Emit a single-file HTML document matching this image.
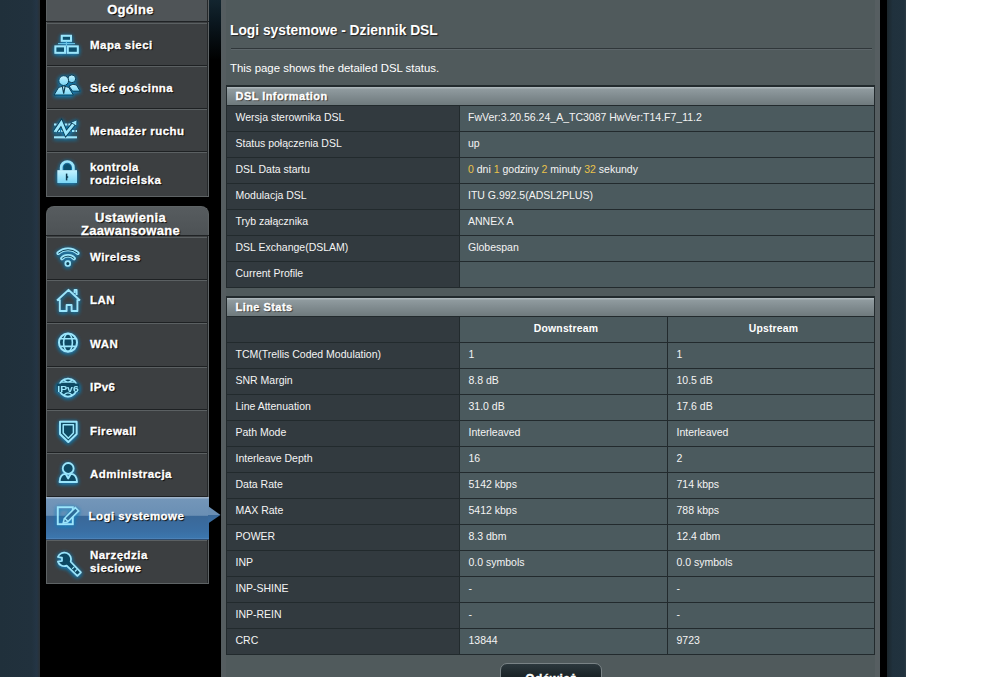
<!DOCTYPE html>
<html><head><meta charset="utf-8"><style>
*{margin:0;padding:0;box-sizing:border-box}
html,body{width:999px;height:677px;overflow:hidden;background:#fff;font-family:"Liberation Sans",sans-serif}
.abs{position:absolute}
#navyL{left:0;top:0;width:40px;height:677px;background:linear-gradient(to right,#20303b 0,#21313d 78%,#243545 92%,#2a3034 100%)}
#blackcol{left:40px;top:0;width:181px;height:677px;background:#000}
#gapgrad{left:209px;top:0;width:12px;height:60px;background:linear-gradient(to bottom,#13252f 0,#0b1820 35%,#000 100%)}
#panel{left:221px;top:0;width:659px;height:677px;background:#505a5c}
#panelL{left:221px;top:0;width:5px;height:677px;background:#555d60}
#panelR{left:875px;top:0;width:5px;height:677px;background:#565e61}
#blackR{left:880px;top:0;width:7px;height:677px;background:#000}
#navyR{left:887px;top:0;width:19px;height:677px;background:linear-gradient(to right,#1b262b 0,#20313d 30%,#21323e 90%,#2b3a44 100%)}
.cont{left:46px;width:163px;background:#3c3f41;border:1px solid #5e6365;border-top:none}
.ll{left:47px;width:161px;height:1px;background:#5b6062}
.dl{left:47px;width:161px;height:1px;background:#1e2123}
.mt{-webkit-text-stroke:0.3px #fff;letter-spacing:0.45px;color:#fff;font-weight:bold;font-size:11.5px;line-height:12px;text-shadow:1px 1px 1px #000;white-space:nowrap}
.gh{-webkit-text-stroke:0.3px #fff;letter-spacing:0.3px;color:#fff;font-weight:bold;font-size:13px;line-height:13px;text-shadow:1px 1px 1px #000;white-space:nowrap;text-align:center;width:163px;left:49px}
.h1{left:230px;font-size:13.8px;line-height:14px;font-weight:bold;color:#fff;text-shadow:1px 1px 1px #222;white-space:nowrap}
.desc{left:230px;font-size:11.4px;line-height:12px;color:#fff;white-space:nowrap}
.tbl{left:226px;width:649px;background:#222a2d}
.thd{left:227px;width:647px;height:18px;background:linear-gradient(to bottom,#b0babe 0,#a8b2b6 1px,#909b9f 2px,#818c90 50%,#6f7a7d 100%)}
.tht{-webkit-text-stroke:0.3px #fff;letter-spacing:0.45px;left:235.5px;color:#fff;font-weight:bold;font-size:11px;line-height:12px;text-shadow:1px 1px 1px #333;white-space:nowrap}
.c1{left:227px;width:232px;height:25px;background:#323a3f}
.c2{left:460px;width:414px;height:25px;background:#4b5a5e}
.c2a{left:460px;width:207px;height:25px;background:#4b5a5e}
.c2b{left:668px;width:206px;height:25px;background:#4b5a5e}
.tt{font-size:10.5px;line-height:11px;color:#f4f4f4;white-space:nowrap}
.tb{padding-left:5px;letter-spacing:0.2px;font-size:10.4px;line-height:11px;color:#fff;font-weight:bold;white-space:nowrap;text-align:center}
.y{color:#e9c24a}
#btn{left:500px;top:663px;width:102px;height:30px;border:1px solid #7a8386;border-radius:7px;background:linear-gradient(to bottom,#2c383d 0,#1c2529 40%,#12181b 100%)}
#btnt{left:500px;width:102px;text-align:center;color:#fff;font-weight:bold;font-size:12px;line-height:12px;-webkit-text-stroke:0.3px #fff;letter-spacing:0.4px}
#sel{left:46px;top:497px;width:163px;height:43px;background:linear-gradient(to bottom,#a0b4ca 0,#a0b4ca 1px,#7396b9 2px,#6a8fb4 42.5%,#3a6898 45%,#3a6fa4 80%,#3c77ae 96%,#5a8cc0 97%,#13233a 100%)}
</style></head><body>
<div id="navyL" class="abs"></div><div id="blackcol" class="abs"></div><div id="gapgrad" class="abs"></div>
<div id="panel" class="abs"></div><div id="panelL" class="abs"></div><div id="panelR" class="abs"></div><div id="blackR" class="abs"></div><div id="navyR" class="abs"></div>
<div class="abs" style="left:46px;top:0;width:163px;height:21px;background:#4f5457;border-left:1px solid #5e6365;border-right:1px solid #5e6365"></div>
<div class="abs" style="left:46px;top:21px;width:163px;height:1px;background:#202325"></div>
<div class="abs gh" style="top:2.8px">Ogólne</div>
<div class="abs cont" style="top:22px;height:175px"></div>
<div class="abs ll" style="top:23px"></div>
<div class="abs dl" style="top:65px"></div>
<div class="abs ll" style="top:66px"></div>
<div class="abs dl" style="top:108px"></div>
<div class="abs ll" style="top:109px"></div>
<div class="abs dl" style="top:151px"></div>
<div class="abs ll" style="top:152px"></div>
<div class="abs" style="left:207px;top:0;width:1px;height:196px;background:#25282a"></div>
<div class="abs" style="left:46px;top:206px;width:163px;height:30px;background:linear-gradient(to bottom,#575c5f,#4d5255);border:1px solid #5e6365;border-bottom:none;border-radius:8px 8px 0 0"></div>
<div class="abs" style="left:46px;top:235px;width:163px;height:1px;background:#202325"></div>
<div class="abs gh" style="top:210.8px">Ustawienia</div>
<div class="abs gh" style="top:224.4px">Zaawansowane</div>
<div class="abs cont" style="top:236px;height:348px"></div>
<div class="abs ll" style="top:237px"></div>
<div class="abs dl" style="top:279px"></div>
<div class="abs ll" style="top:280px"></div>
<div class="abs dl" style="top:322px"></div>
<div class="abs ll" style="top:323px"></div>
<div class="abs dl" style="top:366px"></div>
<div class="abs ll" style="top:367px"></div>
<div class="abs dl" style="top:409px"></div>
<div class="abs ll" style="top:410px"></div>
<div class="abs dl" style="top:452px"></div>
<div class="abs ll" style="top:453px"></div>
<div class="abs dl" style="top:496px"></div>
<div class="abs ll" style="top:497px"></div>
<div class="abs dl" style="top:539px"></div>
<div class="abs ll" style="top:540px"></div>
<div class="abs" style="left:207px;top:236px;width:1px;height:347px;background:#25282a"></div>
<div id="sel" class="abs"></div>
<div class="abs mt" style="left:90px;top:38.5px">Mapa sieci</div>
<div class="abs mt" style="left:90px;top:81.8px">Sieć gościnna</div>
<div class="abs mt" style="left:90px;top:125.3px">Menadżer ruchu</div>
<div class="abs mt" style="left:90px;top:250.8px">Wireless</div>
<div class="abs mt" style="left:90px;top:294.1px">LAN</div>
<div class="abs mt" style="left:90px;top:338.1px">WAN</div>
<div class="abs mt" style="left:90px;top:381.4px">IPv6</div>
<div class="abs mt" style="left:90px;top:424.6px">Firewall</div>
<div class="abs mt" style="left:90px;top:467.7px">Administracja</div>
<div class="abs mt" style="left:88.5px;top:509.6px">Logi systemowe</div>
<div class="abs mt" style="left:90px;top:161.4px">kontrola</div>
<div class="abs mt" style="left:90px;top:174.4px">rodzicielska</div>
<div class="abs mt" style="left:90px;top:548.7px">Narzędzia</div>
<div class="abs mt" style="left:90px;top:561.6px">sieciowe</div>
<div class="abs h1" style="top:23.9px">Logi systemowe - Dziennik DSL</div>
<div class="abs" style="left:231px;top:48px;width:641px;height:1px;background:#30373a"></div>
<div class="abs" style="left:231px;top:49px;width:641px;height:1px;background:#5d666a"></div>
<div class="abs desc" style="top:61.9px">This page shows the detailed DSL status.</div>
<div class="abs tbl" style="top:85px;height:203px"></div>
<div class="abs thd" style="top:87px"></div>
<div class="abs tht" style="top:89.6px">DSL Information</div>
<div class="abs c1" style="top:106px"></div><div class="abs c2" style="top:106px"></div>
<div class="abs tt" style="left:235.5px;top:112.0px">Wersja sterownika DSL</div>
<div class="abs tt" style="left:468px;top:112.0px">FwVer:3.20.56.24_A_TC3087 HwVer:T14.F7_11.2</div>
<div class="abs c1" style="top:132px"></div><div class="abs c2" style="top:132px"></div>
<div class="abs tt" style="left:235.5px;top:138.0px">Status połączenia DSL</div>
<div class="abs tt" style="left:468px;top:138.0px">up</div>
<div class="abs c1" style="top:158px"></div><div class="abs c2" style="top:158px"></div>
<div class="abs tt" style="left:235.5px;top:164.0px">DSL Data startu</div>
<div class="abs tt" style="left:468px;top:164.0px"><span class="y">0</span> dni <span class="y">1</span> godziny <span class="y">2</span> minuty <span class="y">32</span> sekundy</div>
<div class="abs c1" style="top:184px"></div><div class="abs c2" style="top:184px"></div>
<div class="abs tt" style="left:235.5px;top:190.0px">Modulacja DSL</div>
<div class="abs tt" style="left:468px;top:190.0px">ITU G.992.5(ADSL2PLUS)</div>
<div class="abs c1" style="top:210px"></div><div class="abs c2" style="top:210px"></div>
<div class="abs tt" style="left:235.5px;top:216.0px">Tryb załącznika</div>
<div class="abs tt" style="left:468px;top:216.0px">ANNEX A</div>
<div class="abs c1" style="top:236px"></div><div class="abs c2" style="top:236px"></div>
<div class="abs tt" style="left:235.5px;top:242.0px">DSL Exchange(DSLAM)</div>
<div class="abs tt" style="left:468px;top:242.0px">Globespan</div>
<div class="abs c1" style="top:262px"></div><div class="abs c2" style="top:262px"></div>
<div class="abs tt" style="left:235.5px;top:268.0px">Current Profile</div>
<div class="abs tt" style="left:468px;top:268.0px"></div>
<div class="abs tbl" style="top:296px;height:359px"></div>
<div class="abs thd" style="top:298px"></div>
<div class="abs tht" style="top:300.6px">Line Stats</div>
<div class="abs c1" style="top:317px"></div><div class="abs c2a" style="top:317px"></div><div class="abs c2b" style="top:317px"></div>
<div class="abs tb" style="left:460px;width:207px;top:322.5px">Downstream</div>
<div class="abs tb" style="left:668px;width:206px;top:322.5px">Upstream</div>
<div class="abs c1" style="top:343px"></div><div class="abs c2a" style="top:343px"></div><div class="abs c2b" style="top:343px"></div>
<div class="abs tt" style="left:235.5px;top:349.0px">TCM(Trellis Coded Modulation)</div>
<div class="abs tt" style="left:468.5px;top:349.0px">1</div>
<div class="abs tt" style="left:676.5px;top:349.0px">1</div>
<div class="abs c1" style="top:369px"></div><div class="abs c2a" style="top:369px"></div><div class="abs c2b" style="top:369px"></div>
<div class="abs tt" style="left:235.5px;top:375.0px">SNR Margin</div>
<div class="abs tt" style="left:468.5px;top:375.0px">8.8 dB</div>
<div class="abs tt" style="left:676.5px;top:375.0px">10.5 dB</div>
<div class="abs c1" style="top:395px"></div><div class="abs c2a" style="top:395px"></div><div class="abs c2b" style="top:395px"></div>
<div class="abs tt" style="left:235.5px;top:401.0px">Line Attenuation</div>
<div class="abs tt" style="left:468.5px;top:401.0px">31.0 dB</div>
<div class="abs tt" style="left:676.5px;top:401.0px">17.6 dB</div>
<div class="abs c1" style="top:421px"></div><div class="abs c2a" style="top:421px"></div><div class="abs c2b" style="top:421px"></div>
<div class="abs tt" style="left:235.5px;top:427.0px">Path Mode</div>
<div class="abs tt" style="left:468.5px;top:427.0px">Interleaved</div>
<div class="abs tt" style="left:676.5px;top:427.0px">Interleaved</div>
<div class="abs c1" style="top:447px"></div><div class="abs c2a" style="top:447px"></div><div class="abs c2b" style="top:447px"></div>
<div class="abs tt" style="left:235.5px;top:453.0px">Interleave Depth</div>
<div class="abs tt" style="left:468.5px;top:453.0px">16</div>
<div class="abs tt" style="left:676.5px;top:453.0px">2</div>
<div class="abs c1" style="top:473px"></div><div class="abs c2a" style="top:473px"></div><div class="abs c2b" style="top:473px"></div>
<div class="abs tt" style="left:235.5px;top:479.0px">Data Rate</div>
<div class="abs tt" style="left:468.5px;top:479.0px">5142 kbps</div>
<div class="abs tt" style="left:676.5px;top:479.0px">714 kbps</div>
<div class="abs c1" style="top:499px"></div><div class="abs c2a" style="top:499px"></div><div class="abs c2b" style="top:499px"></div>
<div class="abs tt" style="left:235.5px;top:505.0px">MAX Rate</div>
<div class="abs tt" style="left:468.5px;top:505.0px">5412 kbps</div>
<div class="abs tt" style="left:676.5px;top:505.0px">788 kbps</div>
<div class="abs c1" style="top:525px"></div><div class="abs c2a" style="top:525px"></div><div class="abs c2b" style="top:525px"></div>
<div class="abs tt" style="left:235.5px;top:531.0px">POWER</div>
<div class="abs tt" style="left:468.5px;top:531.0px">8.3 dbm</div>
<div class="abs tt" style="left:676.5px;top:531.0px">12.4 dbm</div>
<div class="abs c1" style="top:551px"></div><div class="abs c2a" style="top:551px"></div><div class="abs c2b" style="top:551px"></div>
<div class="abs tt" style="left:235.5px;top:557.0px">INP</div>
<div class="abs tt" style="left:468.5px;top:557.0px">0.0 symbols</div>
<div class="abs tt" style="left:676.5px;top:557.0px">0.0 symbols</div>
<div class="abs c1" style="top:577px"></div><div class="abs c2a" style="top:577px"></div><div class="abs c2b" style="top:577px"></div>
<div class="abs tt" style="left:235.5px;top:583.0px">INP-SHINE</div>
<div class="abs tt" style="left:468.5px;top:583.0px">-</div>
<div class="abs tt" style="left:676.5px;top:583.0px">-</div>
<div class="abs c1" style="top:603px"></div><div class="abs c2a" style="top:603px"></div><div class="abs c2b" style="top:603px"></div>
<div class="abs tt" style="left:235.5px;top:609.0px">INP-REIN</div>
<div class="abs tt" style="left:468.5px;top:609.0px">-</div>
<div class="abs tt" style="left:676.5px;top:609.0px">-</div>
<div class="abs c1" style="top:629px"></div><div class="abs c2a" style="top:629px"></div><div class="abs c2b" style="top:629px"></div>
<div class="abs tt" style="left:235.5px;top:635.0px">CRC</div>
<div class="abs tt" style="left:468.5px;top:635.0px">13844</div>
<div class="abs tt" style="left:676.5px;top:635.0px">9723</div>
<div id="btn" class="abs"></div>
<div id="btnt" class="abs" style="top:672.6px">Odśwież</div>
<svg class="abs" style="left:0;top:0" width="240" height="677" viewBox="0 0 240 677">
<defs>
<filter id="glow" x="-60%" y="-60%" width="220%" height="220%">
<feGaussianBlur in="SourceAlpha" stdDeviation="2.1" result="b"/>
<feOffset in="b" dy="1.3" result="bo"/>
<feFlood flood-color="#1486c4" flood-opacity="0.75"/>
<feComposite in2="bo" operator="in" result="g"/>
<feGaussianBlur in="SourceGraphic" stdDeviation="0.3" result="s"/>
<feMerge><feMergeNode in="g"/><feMergeNode in="g"/><feMergeNode in="s"/></feMerge>
</filter>
<linearGradient id="selg" x1="0" y1="0" x2="0" y2="1">
<stop offset="0" stop-color="#6a8fb4"/><stop offset="0.5" stop-color="#6a8fb4"/><stop offset="0.5" stop-color="#3a6898"/><stop offset="1" stop-color="#3a70a6"/>
</linearGradient>
<linearGradient id="cy" x1="0" y1="0" x2="0" y2="1">
<stop offset="0" stop-color="#c4f3ff"/><stop offset="1" stop-color="#7ad6f6"/>
</linearGradient>
</defs>
<polygon points="208,506 220.5,515 208,523.5" fill="url(#selg)"/>
<g filter="url(#glow)" fill="none" stroke="#9ae6fc" stroke-width="2" stroke-linejoin="miter">
<!-- map -->
<rect x="61.8" y="35.8" width="9.2" height="5" fill="#0f4f6c"/>
<rect x="55.4" y="46.4" width="9.6" height="6.4" fill="#0f4f6c"/>
<rect x="67.8" y="46.4" width="10" height="6.4" fill="#0f4f6c"/>
<path d="M66.4 41.5V46 M58 43.6H75" stroke-width="1" stroke="#6cc8ea"/>
<!-- guest -->
<g fill="url(#cy)" stroke="#0b3a50" stroke-width="1">
<path d="M69 86 Q73 83 76.5 85 L80.2 91.2 L72.5 91.2 Z"/>
<circle cx="71.8" cy="78.8" r="3.9"/>
<path d="M54 95 L58.6 87.4 Q63.7 84.6 68.8 87.4 L73.4 95 Z"/>
<circle cx="63.7" cy="80.6" r="4.9"/>
<path d="M62.4 86.8 L63.7 93.6 L65 86.8" fill="none" stroke="#0b3a50" stroke-width="1.1"/>
</g>
<!-- traffic -->
<path d="M54 124.6H77 M54 131H77" stroke-width="2" stroke-dasharray="2.4 1.2"/>
<path d="M54 137.3H77" stroke-width="2"/>
<path d="M55.2 131.6 L61.3 122.6 L66 133.6 L73.8 123.8" stroke="#0b3a50" stroke-width="4.6" stroke-linejoin="miter" stroke-miterlimit="2.2"/>
<path d="M55.2 131.6 L61.3 122.6 L66 133.6 L73.8 123.8" stroke-width="2.8" stroke-linejoin="miter" stroke-miterlimit="2.2"/>
<path d="M70.8 122.4 L77 119.8 L76.6 126.2 Z" fill="#9ae6fc" stroke="#0b3a50" stroke-width="0.8"/>
<!-- lock -->
<path d="M61.2 170.5 V167.6 A6.1 6.1 0 0 1 73.4 167.6 V170.5" stroke-width="2.6"/>
<path d="M63.5 170.5 V167.9 A3.8 3.8 0 0 1 71.1 167.9 V170.5 Z" fill="#0f4f6c" stroke="none"/>
<rect x="57.4" y="170.2" width="19.6" height="12.8" fill="url(#cy)" stroke="none"/>
<path d="M66.6 173.6 V180.4" stroke="#0b3a50" stroke-width="1.5"/>
<path d="M66.6 175.8 L68.6 177.1 L66.6 178.4 Z" fill="#0b3a50" stroke="none"/>
<!-- wifi -->
<path d="M58.2 253.2 A14.6 14.6 0 0 1 77.8 253.2" stroke-width="3.6" stroke-linecap="round"/>
<path d="M58.6 253 A14.6 14.6 0 0 1 77.4 253" stroke="#0f3f55" stroke-width="1" stroke-linecap="round"/>
<path d="M61.8 258.5 A8.5 8.5 0 0 1 74.2 258.5" stroke-width="3.4" stroke-linecap="round"/>
<path d="M62.2 258.3 A8.5 8.5 0 0 1 73.8 258.3" stroke="#0f3f55" stroke-width="0.9" stroke-linecap="round"/>
<circle cx="67.8" cy="263.6" r="2.4" stroke-width="1.7" fill="#0f3f55"/>
<!-- lan -->
<path d="M57 300.5 L68.5 289.8 L80 300.5 M59.8 299.5 V311 H66.6 V305 H71.6 V311 H77.4 V299.5 M74.6 293 V289.8 H76.6 V295" stroke-width="1.8" stroke-linejoin="round"/>
<!-- wan -->
<circle cx="68" cy="342.6" r="9" stroke-width="2" fill="#0f4a63"/>
<ellipse cx="68" cy="342.6" rx="4.4" ry="9" stroke-width="1.6"/>
<path d="M60.2 338.8H75.8 M60.2 346.4H75.8" stroke-width="1.6"/>
<!-- ipv6 -->
<circle cx="68" cy="387.6" r="9" stroke-width="1.8" fill="#0f4a63"/>
<path d="M62 382.2H74 M64 380 Q68 384 72 380" stroke-width="1.2"/>
<path d="M64 395 Q68 391 72 395" stroke-width="1.2"/>
<rect x="56.5" y="383.5" width="23" height="8.5" fill="#0f4a63" stroke="none"/>
<text x="68" y="391.6" font-family="Liberation Sans" font-size="9.4" font-weight="bold" fill="#9ce6fb" stroke="none" text-anchor="middle" textLength="21.5" lengthAdjust="spacingAndGlyphs">IPv6</text>
<!-- firewall -->
<path d="M60 421.8 H76.6 V434 L68.3 442 L60 434 Z" stroke-width="1.9" stroke-linejoin="round" fill="#0f4a63"/>
<path d="M63.2 424.8 H73.4 V433 L68.3 438.2 L63.2 433 Z" stroke-width="1.5" stroke-linejoin="round"/>
<!-- admin -->
<circle cx="68.2" cy="468.4" r="5.4" stroke-width="1.8" fill="#0f4a63"/>
<path d="M59.6 482 Q59.8 474.2 65.5 473.8 L68.2 478.5 L70.9 473.8 Q76.8 474.2 77 482 Z" stroke-width="1.8" stroke-linejoin="round" fill="#0f4a63"/>
<!-- logs -->
<rect x="57.8" y="507.2" width="15" height="17" stroke-width="1.8"/>
<path d="M63.3 523 L64.2 518.8 L75.3 507.6 L78.6 510.9 L67.5 522 Z M65 518.5 L67.8 521.3" stroke-width="1.5" fill="#2f6c98"/>
<!-- wrench -->
<path d="M70.65 561.74 L80.92 572.38 L77.38 575.92 L66.74 565.65 A6.8 6.8 0 0 1 57.91 561.63 L62 561 L62 557.6 L57.91 556.97 A6.8 6.8 0 1 1 70.65 561.74 Z" stroke-width="1.7" fill="#0f4a63" stroke-linejoin="round"/>
<path d="M72.2 568.8 L74.2 566.8 M74.9 571.5 L76.9 569.5" stroke-width="1.2"/>
</g>
</svg>

</body></html>
